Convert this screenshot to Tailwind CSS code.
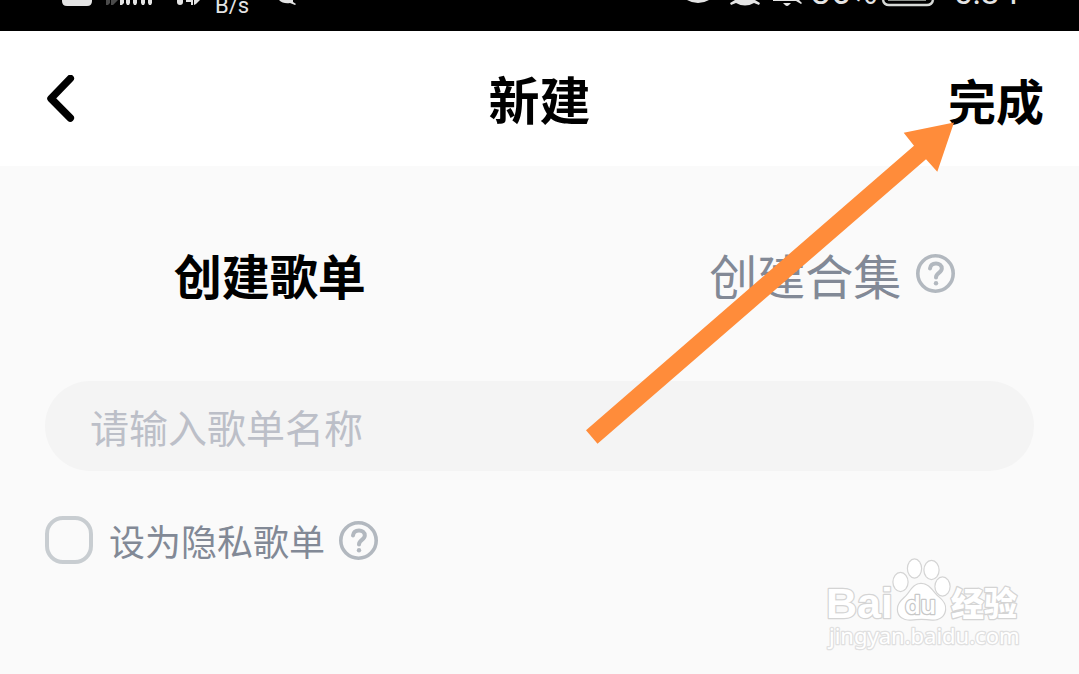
<!DOCTYPE html>
<html lang="zh-CN">
<head>
    <meta charset="UTF-8">
    <meta name="viewport" content="width=device-width, initial-scale=1.0">
    <title>新建</title>
    <script src="https://cdn.jsdelivr.net/npm/@tailwindcss/browser@4"></script>
</head>
<body class="bg-white font-['Noto_Sans_CJK_SC',sans-serif]">
    <div class="relative flex flex-col min-h-screen overflow-hidden">
        <!-- status bar -->
        <div class="flex items-start justify-between h-[31px] pl-[62px] pr-[60px] overflow-hidden bg-black text-[#e4e4e4] font-[Roboto,sans-serif]">
            <div class="flex items-start">
                <svg class="w-[153px] h-4" viewBox="0 0 153 16" fill="#e4e4e4">
                    <path d="M0 0h30v1q0 5-5 5H5q-5 0-5-5z"/>
                    <path d="M44 0h4v3l-2 2h-2zM49 0h7l-5 5h-2z" fill="#4a4a4a"/>
                    <path d="M58 0h4v3l-2 2h-2zM64 0h4v3l-1 2h-2l-1-2zM71 0h4v3l-1 2h-2l-1-2zM79 0h4v3l-1 2h-2l-1-2zM86 0h4v3l-1 2h-2l-1-2z"/>
                    <path d="M115 0h6v2a3 3 0 0 1-6 0zM124 0h7v5h-2V2h-5zM132 0h6l-4 4-2 1z"/>
                </svg>
                <span class="text-[22px] leading-[11px]">B/s</span>
                <svg class="w-12 h-4 ml-1" viewBox="0 0 48 16" fill="#e4e4e4">
                    <path d="M26 0h14v2l3 2-1 1-5-2q-7 1-11-3z"/>
                </svg>
            </div>
            <div class="flex items-start">
                <svg class="w-[124px] h-4" viewBox="0 0 124 16" fill="#e4e4e4">
                    <path d="M0 0h22q-5 3-11 3T0 0z"/>
                    <path d="M48 0h20l5 3-1 2-5-2q-9 5-18 0l-5 2-1-2z"/>
                    <path d="M86 0h26l3 3-1 1-5-3H86zM96 3h8l-2 2q-2 2-4 0z"/>
                </svg>
                <span class="-mt-4 text-[36px] leading-4">86%</span>
                <svg class="w-14 h-4 ml-1" viewBox="0 0 56 16" fill="none">
                    <path d="M2 0q1 5 6 5h38q5 0 6-5" stroke="#d6d9d6" stroke-width="2.5"/>
                    <path d="M7 0h38" stroke="#8a8f8a" stroke-width="2"/>
                </svg>
                <span class="-mt-4 ml-4 text-[34px] leading-4">6:34</span>
            </div>
        </div>

        <!-- title bar -->
        <header class="grid grid-cols-3 items-center h-[135px] px-[35px] bg-white text-black">
            <button type="button" aria-label="返回" class="justify-self-start">
                <svg class="w-12 h-12" viewBox="35 74 48 48" fill="none" stroke="#000" stroke-width="7.5" stroke-linecap="round" stroke-linejoin="round">
                    <path d="M70.3 77.500 51 97.500l19.300 19.500"/>
                </svg>
            </button>
            <h1 class="justify-self-center text-[51px] font-bold">新建</h1>
            <button type="button" class="justify-self-end text-[48px] font-bold">完成</button>
        </header>

        <main class="grow px-[45px] pb-6 bg-[#fafafa]">
            <div class="-mx-[45px] grid grid-cols-2 items-center h-[215px] text-[48px]">
                <button type="button" class="font-bold text-black">创建歌单</button>
                <button type="button" class="flex items-center justify-center gap-[15px] pl-[46px] text-[#828996]">
                    创建合集
                    <svg class="w-[39px] h-[39px]" viewBox="0 0 39 39" fill="none" stroke="#b2b8bf" stroke-width="3.600" stroke-linecap="round">
                        <circle cx="19.500" cy="19.500" r="17.700"/>
                        <path stroke-width="4" d="M14 14.400c.4-3.200 2.800-5 6-5s5.800 2 5.800 5c0 4.400-5.800 4.600-5.800 9"/>
                        <circle cx="20" cy="29.300" r="2.200" fill="#b2b8bf" stroke="none"/>
                    </svg>
                </button>
            </div>

            <input type="text" name="name" aria-label="歌单名称" placeholder="请输入歌单名称" class="block w-full h-[90px] px-[45px] rounded-full bg-[#f4f4f4] text-[39px] text-black placeholder:text-[#bcbfc8] outline-none">

            <div class="flex items-center mt-[45px] h-12">
                <input type="checkbox" id="private" class="appearance-none w-12 h-12 rounded-[18px] border-4 border-[#c8cdd1] checked:bg-[#c8cdd1]">
                <label for="private" class="ml-4 text-[36px] leading-12 text-[#828996]">设为隐私歌单</label>
                <button type="button" aria-label="隐私歌单说明" class="ml-[14px]">
                    <svg class="w-[39px] h-[39px]" viewBox="0 0 39 39" fill="none" stroke="#b2b8bf" stroke-width="3.600" stroke-linecap="round">
                        <circle cx="19.500" cy="19.500" r="17.700"/>
                        <path stroke-width="4" d="M14 14.400c.4-3.200 2.800-5 6-5s5.800 2 5.800 5c0 4.400-5.800 4.600-5.800 9"/>
                        <circle cx="20" cy="29.300" r="2.200" fill="#b2b8bf" stroke="none"/>
                    </svg>
                </button>
            </div>
        </main>

        <!-- watermark -->
        <svg class="absolute right-[53px] bottom-[18px] w-[202px] h-[100px]" viewBox="824 556 202 100" fill="#fff" stroke="#d4d4d4" stroke-width="2.500" stroke-linejoin="round" paint-order="stroke">
            <text x="826" y="618" font-family="Liberation Sans, sans-serif" font-weight="bold" font-size="43">Bai</text>
            <g stroke-width="2.400">
                <ellipse cx="900.500" cy="582" rx="7" ry="9"/>
                <ellipse cx="914.500" cy="568.500" rx="6.500" ry="9"/>
                <ellipse cx="931.500" cy="570" rx="7" ry="9"/>
                <ellipse cx="942.500" cy="586.500" rx="7" ry="9"/>
                <path d="M921 584c8 0 11 7 16 12 5 4 9 8 8 14-1 7-7 10-13 9.500-7-1-14-1-21 0-7 .5-13-3-13-10 0-6 4-9 8-13 5-5 7-12.500 15-12.500z"/>
            </g>
            <text x="905" y="614" font-family="Inter, sans-serif" font-weight="600" font-size="25" stroke="#c8c8c8">du</text>
            <text x="951" y="616" font-family="Noto Sans CJK SC, sans-serif" font-weight="900" font-size="33">经验</text>
            <text x="829" y="644" font-family="Noto Sans, sans-serif" font-size="22" stroke="#e0e0e0">jingyan.baidu.com</text>
        </svg>

        <!-- arrow pointing at the 完成 button -->
        <svg class="absolute right-[125px] top-[122px] w-[368px] h-[322px] pointer-events-none" viewBox="586 122 368 322" fill="#ff8c3a">
            <path d="M954 122.500 937.300 171.700 926 159.300 597.500 443.700 586 430.300 914 145.700 903.700 132.700z"/>
        </svg>
    </div>
</body>
</html>
